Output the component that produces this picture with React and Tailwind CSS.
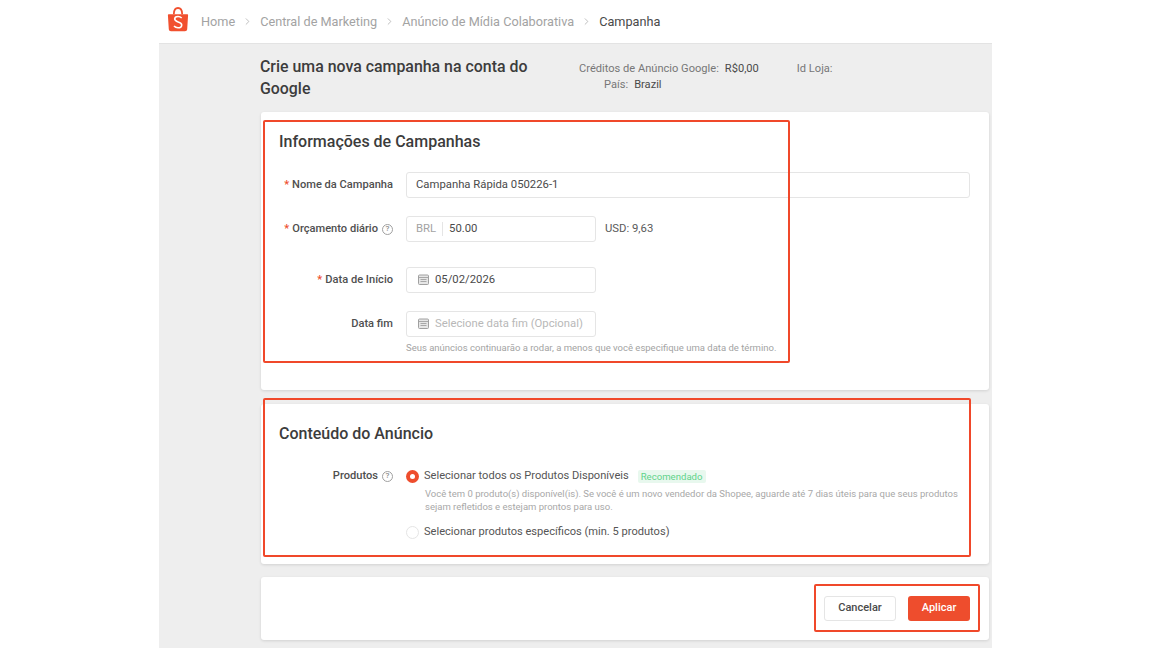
import { ChevronRight } from "lucide-react";

const ShopeeLogo = () => (
    <svg width="22" height="25" viewBox="0 0 22 25" className="mt-[-5px] shrink-0">
        <path d="M1.6 7.2h18.8c.4 0 .7.3.7.7l-.9 14.400c-.1 1.200-1 2-2.200 2H4c-1.200 0-2.100-.8-2.200-2L.9 7.900c0-.4.3-.7.7-.7z" fill="#f1502f" />
        <path d="M6.800 7.200C6.900 3.400 8.600 1 11 1s4.100 2.400 4.200 6.200" fill="none" stroke="#f1502f" strokeWidth="1.800" />
        <path d="M14.700 11c-.9-.9-2.300-1.500-3.700-1.500-1.900 0-3.300 1-3.300 2.600 0 3.600 7 2 7 5.800 0 1.700-1.600 2.800-3.700 2.800-1.500 0-3-.6-4-1.700" fill="none" stroke="#fff" strokeWidth="1.600" />
    </svg>
);

const HelpIcon = () => (
    <span className="ml-[4px] flex h-[11px] w-[11px] items-center justify-center rounded-full border border-[#a0a0a0] text-[8px] leading-none text-[#8a8a8a]">?</span>
);

const CalendarIcon = () => (
    <svg width="11" height="11" viewBox="0 0 11 11" className="mt-[-1px] shrink-0">
        <rect x="0.500" y="1" width="10" height="9.500" rx="1" fill="#e6e6e6" stroke="#a0a0a0" />
        <path d="M1 3.500h9M2.500 5.500h6M2.500 7.500h6" stroke="#a8a8a8" strokeWidth="1" />
    </svg>
);

const Crumb = ({ label, last }) => (
    <>
        <span className={last ? "text-[#4a4a4a]" : "text-[#a3a3a3]"}>{label}</span>
        {!last && <ChevronRight size={11} strokeWidth={1.5} className="mx-[7px] text-[#a3a3a3]" />}
    </>
);

const Label = ({ required, help, children }) => (
    <div className="flex h-[14px] w-[114px] shrink-0 items-center justify-end self-center text-[11.1px] font-medium text-[#4f4f4f]">
        {required && <span className="mr-[3px] text-[#ee4d2d]">*</span>}
        {children}
        {help && <HelpIcon />}
    </div>
);

const DateField = ({ value, placeholder }) => (
    <div className="flex h-[26px] w-[190px] items-center rounded-[3px] border border-[#e5e5e5] pl-[11px] text-[11.3px]">
        <CalendarIcon />
        <span className={placeholder ? "ml-[6px] text-[#b8b8b8]" : "ml-[6px] text-[#4a4a4a]"}>{value || placeholder}</span>
    </div>
);

const Outline = ({ className }) => (
    <div className={"pointer-events-none absolute rounded-[2px] border-2 border-[#f0482a] " + className} />
);

export default function App() {
    return (
        <div className="relative h-[648px] w-[1152px] overflow-hidden bg-white font-['Roboto',sans-serif]">
            <header className="flex h-[43px] items-center pl-[167px] text-[12.7px]">
                <ShopeeLogo />
                <nav className="ml-[12px] flex items-center">
                    <Crumb label="Home" />
                    <Crumb label="Central de Marketing" />
                    <Crumb label="Anúncio de Mídia Colaborativa" />
                    <Crumb label="Campanha" last />
                </nav>
            </header>

            <main className="ml-[159px] h-[605px] w-[833px] border-t border-[#e3e3e3] bg-[#eeeeee] pl-[102px] pr-[3px]">
                <div className="flex h-[68px] items-start pt-[12px]">
                    <h1 className="ml-[-1px] w-[319px] pr-[30px] text-[15.9px] font-medium leading-[22px] text-[#3c3c3c]">Crie uma nova campanha na conta do Google</h1>
                    <div className="pt-[5px] text-[11.1px] leading-[16px] text-[#777777]">
                        <div className="flex">
                            <span>Créditos de Anúncio Google:</span>
                            <span className="ml-[6px] w-[40px] text-[#4a4a4a]">R$0,00</span>
                            <span className="ml-[32px]">Id Loja:</span>
                        </div>
                        <div className="flex pl-[25px]">
                            <span>País:</span>
                            <span className="ml-[6px] text-[#4a4a4a]">Brazil</span>
                        </div>
                    </div>
                </div>

                <section className="h-[278px] rounded-[3px] bg-white pl-[18px] pr-[19px] pt-[20px] shadow-[0_1px_3px_rgba(0,0,0,0.12)]">
                    <h2 className="text-[16px] font-medium leading-[20px] text-[#3c3c3c]">Informações de Campanhas</h2>
                    <div className="mt-[20px] flex h-[26px] items-center gap-[13px]">
                        <Label required>Nome da Campanha</Label>
                        <div className="flex h-[26px] flex-1 items-center rounded-[3px] border border-[#e5e5e5] pl-[9px] text-[11.3px] text-[#4a4a4a]">Campanha Rápida 050226-1</div>
                    </div>
                    <div className="mt-[18px] flex h-[26px] items-center gap-[13px]">
                        <Label required help>Orçamento diário</Label>
                        <div className="flex h-[26px] w-[190px] items-center rounded-[3px] border border-[#e5e5e5] text-[11.3px]">
                            <span className="border-r border-[#e5e5e5] pl-[9px] pr-[6px] leading-[14px] text-[#a3a3a3]">BRL</span>
                            <span className="pl-[6px] text-[#4a4a4a]">50.00</span>
                        </div>
                        <span className="ml-[-4px] text-[11.3px] text-[#5a5a5a]">USD: 9,63</span>
                    </div>
                    <div className="mt-[25px] flex h-[26px] items-center gap-[13px]">
                        <Label required>Data de Início</Label>
                        <DateField value="05/02/2026" />
                    </div>
                    <div className="mt-[18px] flex h-[26px] items-center gap-[13px]">
                        <Label>Data fim</Label>
                        <DateField placeholder="Selecione data fim (Opcional)" />
                    </div>
                    <p className="ml-[127px] mt-[5px] text-[9.5px] leading-[12px] text-[#a3a3a3]">Seus anúncios continuarão a rodar, a menos que você especifique uma data de término.</p>
                </section>

                <section className="mt-[14px] h-[160px] rounded-[3px] bg-white pl-[18px] pr-[19px] pt-[20px] shadow-[0_1px_3px_rgba(0,0,0,0.12)]">
                    <h2 className="text-[16px] font-medium leading-[20px] text-[#3c3c3c]">Conteúdo do Anúncio</h2>
                    <div className="mt-[25px] flex items-start gap-[13px]">
                        <div className="flex self-start">
                            <Label help>Produtos</Label>
                        </div>
                        <div className="flex-1">
                            <div className="flex h-[14px] items-center">
                                <span className="flex h-[13px] w-[13px] items-center justify-center rounded-full bg-[#ee4d2d]">
                                    <span className="h-[5px] w-[5px] rounded-full bg-white" />
                                </span>
                                <span className="ml-[5px] text-[11.1px] text-[#555555]">Selecionar todos os Produtos Disponíveis</span>
                                <span className="ml-[9px] rounded-[2px] bg-[#e8f8ee] px-[3px] text-[9.6px] leading-[13px] text-[#5fd38a]">Recomendado</span>
                            </div>
                            <p className="ml-[19px] mt-[4px] text-[9.5px] leading-[13px] text-[#a8a8a8]">Você tem 0 produto(s) disponível(is). Se você é um novo vendedor da Shopee, aguarde até 7 dias úteis para que seus produtos sejam refletidos e estejam prontos para uso.</p>
                            <div className="mt-[12px] flex h-[14px] items-center">
                                <span className="h-[13px] w-[13px] rounded-full border border-[#e5e5e5]" />
                                <span className="ml-[5px] text-[11.1px] text-[#555555]">Selecionar produtos específicos (min. 5 produtos)</span>
                            </div>
                        </div>
                    </div>
                </section>

                <section className="mt-[13px] flex h-[63px] items-center justify-end gap-[12px] rounded-[3px] bg-white pr-[19px] shadow-[0_1px_3px_rgba(0,0,0,0.12)]">
                    <button className="h-[25px] w-[72px] rounded-[3px] border border-[#e5e5e5] text-[11px] font-medium text-[#4a4a4a]">Cancelar</button>
                    <button className="h-[25px] w-[62px] rounded-[3px] bg-[#ee4d2d] text-[11px] font-medium text-white">Aplicar</button>
                </section>
            </main>

            <Outline className="left-[263px] top-[120px] h-[243px] w-[527px]" />
            <Outline className="left-[263px] top-[398px] h-[159px] w-[708px]" />
            <Outline className="left-[814px] top-[584px] h-[48px] w-[166px]" />
        </div>
    );
}
